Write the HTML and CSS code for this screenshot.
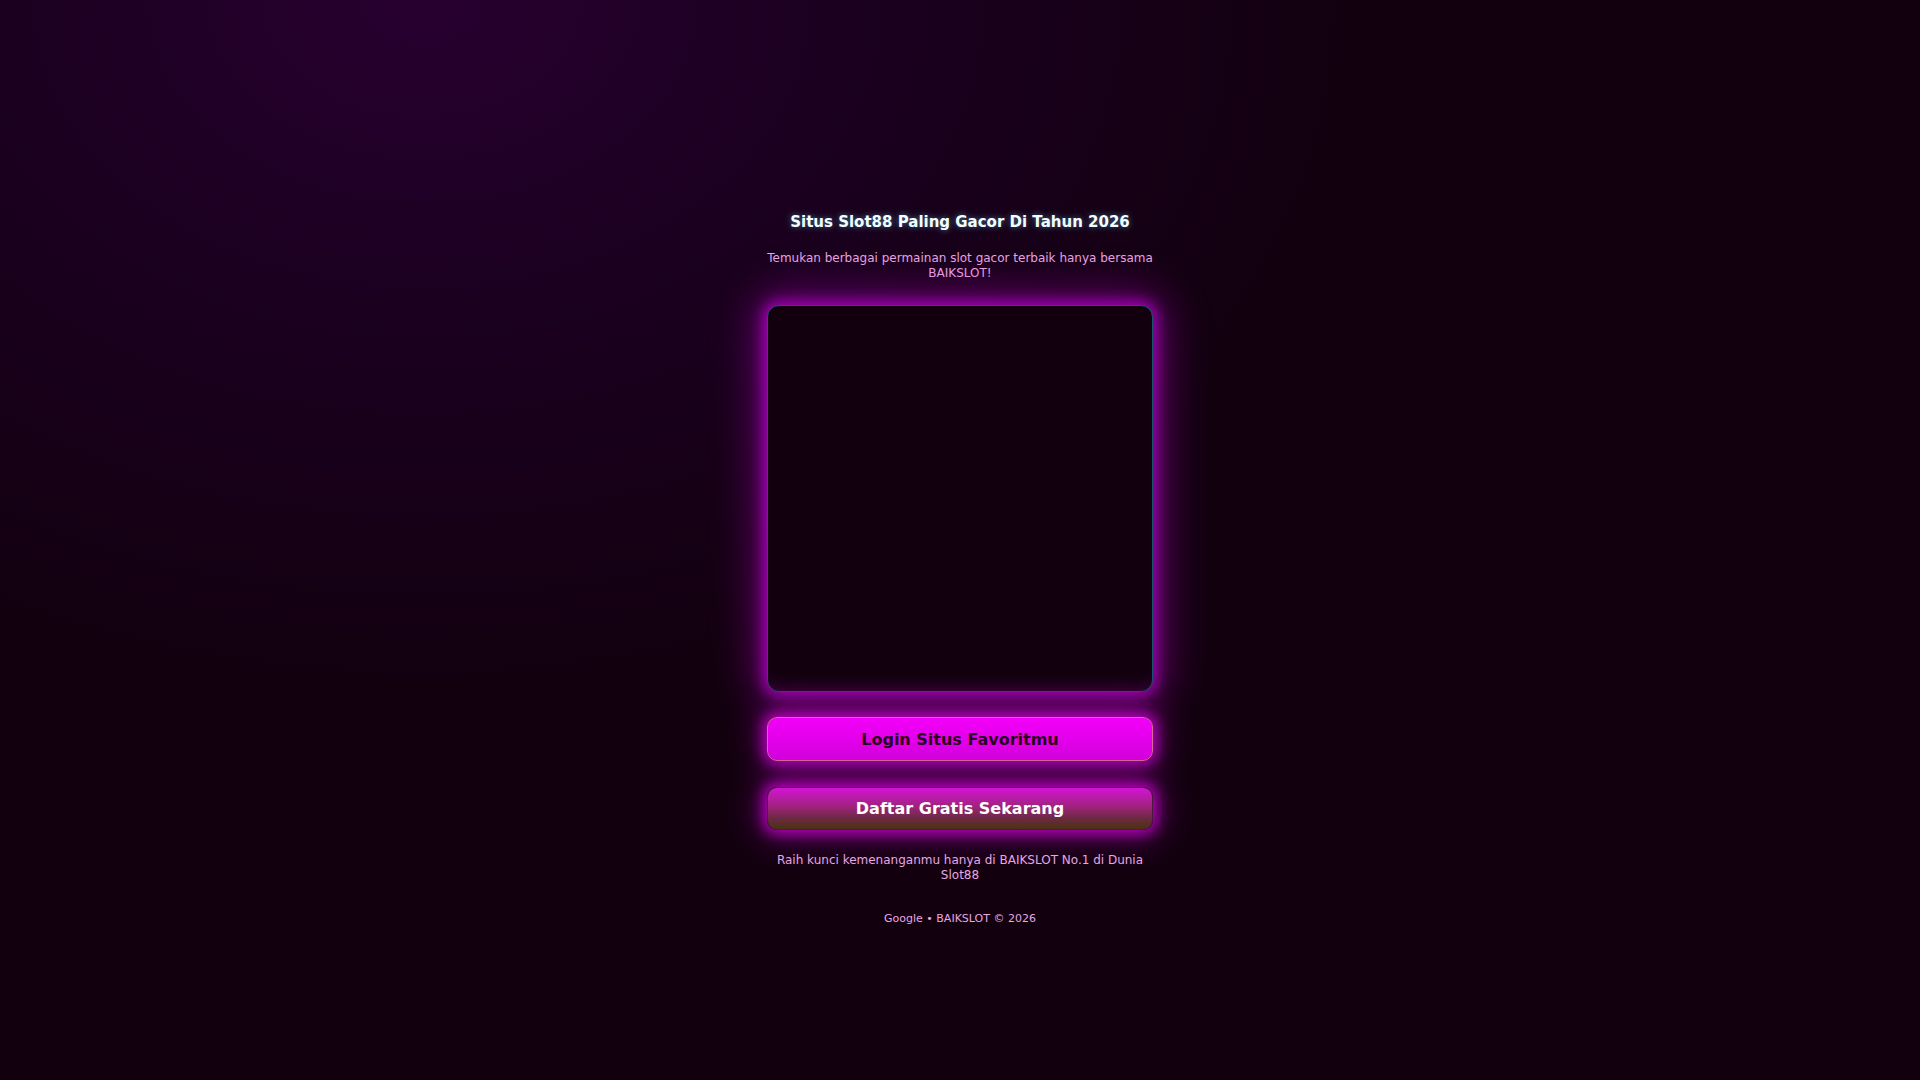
FILE: index.html
```html
<!DOCTYPE html>
<html lang="id">
<head>
<meta charset="utf-8">
<title>BAIKSLOT</title>
<link rel="stylesheet" href="styles.css">
</head>
<body>
<main class="wrap">
  <h1 class="title">Situs Slot88 Paling Gacor Di Tahun 2026</h1>
  <p class="sub">Temukan berbagai permainan slot gacor terbaik hanya bersama BAIKSLOT!</p>
  <div class="card"></div>
  <a class="btn btn-login" href="#">Login Situs Favoritmu</a>
  <a class="btn btn-daftar" href="#">Daftar Gratis Sekarang</a>
  <p class="note">Raih kunci kemenanganmu hanya di BAIKSLOT No.1 di Dunia Slot88</p>
  <p class="copy">Google • BAIKSLOT © 2026</p>
</main>
</body>
</html>
```
FILE: styles.css
```css
html, body {
  margin: 0;
  padding: 0;
  height: 100%;
}
body {
  font-family: "DejaVu Sans", "Noto Sans", sans-serif;
  background-color: #12000f;
  background-image: radial-gradient(ellipse 950px 700px at 22% 0%, #280030 0%, #1b0020 45%, #12000f 100%);
  background-repeat: no-repeat;
  min-height: 1080px;
}
.wrap {
  width: 386px;
  margin: 0 auto;
  padding-top: 213px;
  display: flex;
  flex-direction: column;
  align-items: stretch;
  text-align: center;
}
.title {
  margin: 0;
  font-size: 15px;
  line-height: 18px;
  font-weight: bold;
  color: #f2ffff;
  text-shadow: 0 0 6px rgba(120, 210, 255, 0.55);
}
.sub {
  margin: 20px 0 0;
  font-size: 12px;
  line-height: 14.5px;
  color: #e8a6e2;
}
.card {
  margin-top: 25px;
  height: 385px;
  border: 1px solid #17566a;
  border-radius: 12px;
  background: #12000f;
  box-shadow: 0 0 14px 4px #a000b4, 0 0 44px 12px rgba(200, 0, 215, 0.42), inset 0 -14px 18px -14px rgba(160, 0, 170, 0.35);
}
.btn {
  display: flex;
  align-items: center;
  justify-content: center;
  box-sizing: border-box;
  border-radius: 10px;
  font-size: 16px;
  font-weight: bold;
  text-decoration: none;
}
.btn-login {
  margin-top: 25px;
  height: 44px;
  color: #2a0022;
  border: 1px solid #d8689a;
  background: linear-gradient(to bottom, #f200f8 0%, #e400ec 50%, #d400dc 100%);
  box-shadow: 0 0 14px 4px rgba(220, 0, 230, 0.75), 0 0 34px 8px rgba(170, 0, 180, 0.45);
}
.btn-daftar {
  margin-top: 26px;
  height: 43px;
  color: #ffffff;
  border: 1px solid #4a1a3a;
  background: linear-gradient(to bottom, #d414d4 0%, #a0227e 45%, #6a2a40 75%, #4a3210 100%);
  box-shadow: 0 0 14px 4px rgba(220, 0, 230, 0.75), 0 0 34px 8px rgba(170, 0, 180, 0.45);
}
.note {
  margin: 23px 0 0;
  font-size: 12px;
  line-height: 14.5px;
  color: #e8a6e2;
}
.copy {
  margin: 30px 0 0;
  font-size: 11px;
  line-height: 13px;
  color: #e8a6e2;
}
```
